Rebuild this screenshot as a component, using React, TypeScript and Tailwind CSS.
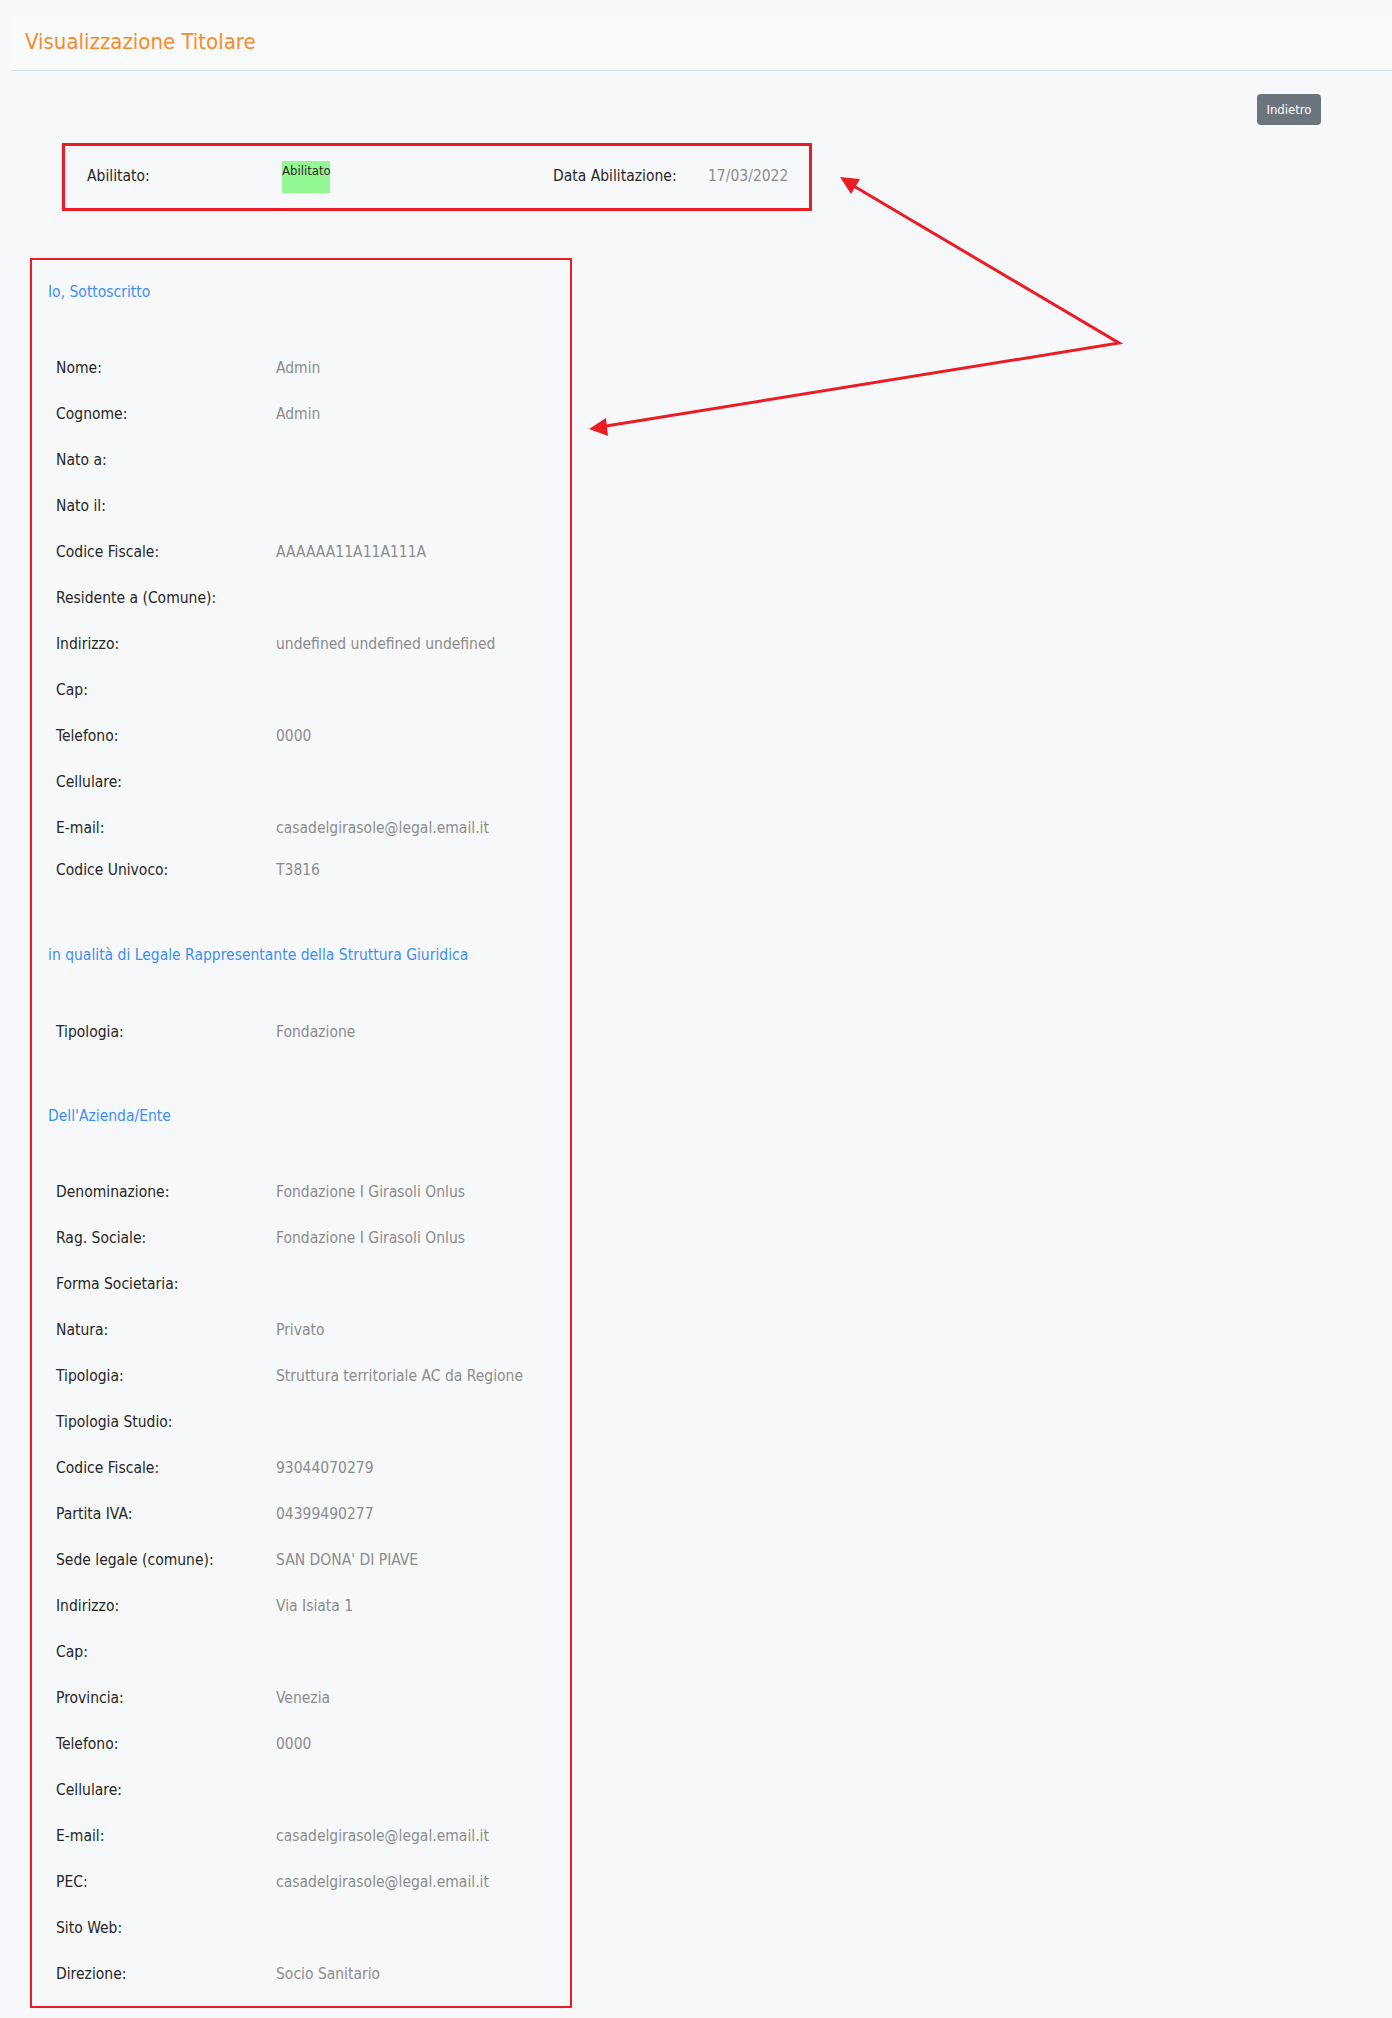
import React from 'react'

const font = { fontFamily: '"DejaVu Sans Condensed", Tahoma, "Liberation Sans", sans-serif' }

type Row = { label: string; value?: string; short?: boolean }

const titolare: Row[] = [
  { label: 'Nome:', value: 'Admin' },
  { label: 'Cognome:', value: 'Admin' },
  { label: 'Nato a:' },
  { label: 'Nato il:' },
  { label: 'Codice Fiscale:', value: 'AAAAAA11A11A111A' },
  { label: 'Residente a (Comune):' },
  { label: 'Indirizzo:', value: 'undefined undefined undefined' },
  { label: 'Cap:' },
  { label: 'Telefono:', value: '0000' },
  { label: 'Cellulare:' },
  { label: 'E-mail:', value: 'casadelgirasole@legal.email.it' },
  { label: 'Codice Univoco:', value: 'T3816', short: true },
]

const azienda: Row[] = [
  { label: 'Denominazione:', value: 'Fondazione I Girasoli Onlus' },
  { label: 'Rag. Sociale:', value: 'Fondazione I Girasoli Onlus' },
  { label: 'Forma Societaria:' },
  { label: 'Natura:', value: 'Privato' },
  { label: 'Tipologia:', value: 'Struttura territoriale AC da Regione' },
  { label: 'Tipologia Studio:' },
  { label: 'Codice Fiscale:', value: '93044070279' },
  { label: 'Partita IVA:', value: '04399490277' },
  { label: 'Sede legale (comune):', value: "SAN DONA' DI PIAVE" },
  { label: 'Indirizzo:', value: 'Via Isiata 1' },
  { label: 'Cap:' },
  { label: 'Provincia:', value: 'Venezia' },
  { label: 'Telefono:', value: '0000' },
  { label: 'Cellulare:' },
  { label: 'E-mail:', value: 'casadelgirasole@legal.email.it' },
  { label: 'PEC:', value: 'casadelgirasole@legal.email.it' },
  { label: 'Sito Web:' },
  { label: 'Direzione:', value: 'Socio Sanitario' },
]

function Heading({ children, className = '' }: { children: React.ReactNode; className?: string }) {
  return <div className={`h-[46px] flex items-center pl-[16px] text-[15.5px] text-[#3e8ef7] ${className}`}>{children}</div>
}

function Rows({ rows, className = '' }: { rows: Row[]; className?: string }) {
  return (
    <div className={className}>
      {rows.map((r, i) => (
        <div key={i} className={`flex items-center pl-[24px] text-[15.5px] ${r.short ? 'h-[38px]' : 'h-[46px]'}`}>
          <span className="w-[220px] shrink-0 text-[#262626]">{r.label}</span>
          <span className="text-[#8c8c8c]">{r.value}</span>
        </div>
      ))}
    </div>
  )
}

export default function App() {
  return (
    <div className="relative w-[1392px] min-h-[2018px] bg-[#f7f8fa] pt-[16px]" style={font}>
      {/* header */}
      <div className="ml-[11px] h-[55px] bg-[#f9fafc] border-b border-[#d6dee8] flex items-center pl-[14px] pb-[4px]">
        <h1 className="text-[22px] text-[#f98a2b] font-normal">Visualizzazione Titolare</h1>
      </div>

      <div className="flex justify-end pr-[71px] pt-[23px]">
        <button className="h-[31px] w-[64px] rounded-[4px] bg-[#6c757d] text-white text-[13px]">Indietro</button>
      </div>

      {/* stato abilitazione */}
      <div className="ml-[62px] mt-[18px] w-[750px] h-[68px] border-[3px] border-[#ec1c24] flex items-center pl-[22px] text-[15.5px]">
        <span className="w-[195px] text-[#262626]">Abilitato:</span>
        <div className="w-[271px]">
          <div className="w-[48px] h-[32px] bg-[#93f893] text-[13px] leading-[20px] text-[#2a2a2a] whitespace-nowrap">Abilitato</div>
        </div>
        <span className="w-[155px] text-[#262626]">Data Abilitazione:</span>
        <span className="text-[#8c8c8c]">17/03/2022</span>
      </div>

      {/* dati */}
      <div className="ml-[30px] mt-[47px] w-[542px] border-2 border-[#ec1c24] pt-[10px] pb-[8px]">
        <Heading>Io, Sottoscritto</Heading>
        <Rows rows={titolare} className="mt-[30px]" />

        <Heading className="mt-[43px]">in qualità di Legale Rappresentante della Struttura Giuridica</Heading>
        <Rows rows={[{ label: 'Tipologia:', value: 'Fondazione' }]} className="mt-[31px]" />

        <Heading className="mt-[38px]">Dell'Azienda/Ente</Heading>
        <Rows rows={azienda} className="mt-[30px]" />
      </div>

      {/* frecce */}
      <svg className="absolute left-0 top-0 pointer-events-none" width="1392" height="2018">
        <polyline points="852,185 1119,343 606,426" fill="none" stroke="#ec1c24" strokeWidth="3" strokeLinejoin="miter" />
        <polygon points="840,177 860,179 851,194" fill="#ec1c24" />
        <polygon points="589,429 606,418 608,436" fill="#ec1c24" />
      </svg>
    </div>
  )
}
